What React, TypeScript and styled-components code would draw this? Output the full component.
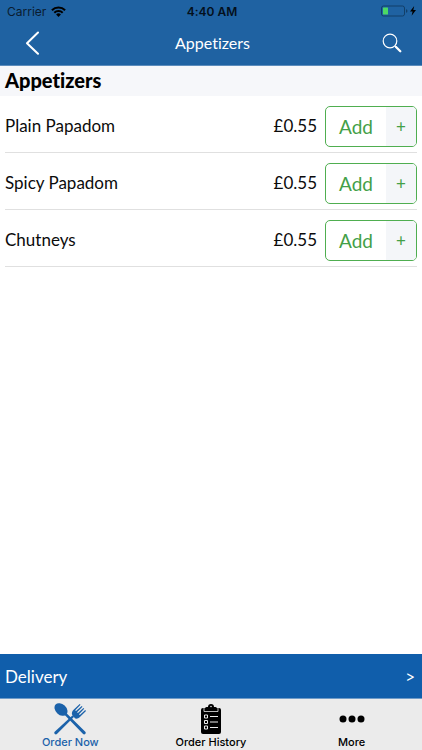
import React from "react";
import styled, { createGlobalStyle } from "styled-components";

const GlobalStyle = createGlobalStyle`
  * { box-sizing: border-box; }
  body {
    margin: 0;
    background: #fff;
    color: #0b0b0b;
    font-family: Lato, "Open Sans", sans-serif;
    font-variant-ligatures: none;
  }
  button { font: inherit; color: inherit; border: 0; padding: 0; background: none; cursor: pointer; }
  svg { display: block; }
`;

const Screen = styled.div`
  display: flex;
  flex-direction: column;
  min-height: 100vh;
`;

const Header = styled.header`
  background: #1f62a2;
  border-bottom: 1px solid #5c8cbc;
`;

const StatusBar = styled.div`
  display: grid;
  grid-template-columns: 1fr auto 1fr;
  align-items: center;
  height: 22px;
  padding: 0 5px 0 7px;
  font-family: Inter, sans-serif;
  font-size: 12px;
  color: #0a1c30;
`;

const Carrier = styled.div`
  display: flex;
  align-items: center;
  gap: 5px;
`;

const Clock = styled.time`
  font-weight: 600;
  color: #04101c;
`;

const Battery = styled.div`
  display: flex;
  align-items: center;
  justify-content: flex-end;
`;

const NavBar = styled.nav`
  display: grid;
  grid-template-columns: 60px 1fr 60px;
  align-items: center;
  height: 43px;
  padding: 0 0 2px 3px;
  color: #fff;
`;

const NavTitle = styled.h1`
  margin: 0;
  font-size: 16px;
  line-height: 20px;
  font-weight: 400;
  text-align: center;
`;

const NavButton = styled.button`
  display: flex;
  align-items: center;
  justify-content: center;
  height: 41px;
`;

const Main = styled.main`
  flex: 1;
`;

const SectionTitle = styled.h2`
  margin: 0;
  padding: 0 5px 2px;
  background: #f6f7fa;
  color: #000;
  font-size: 20px;
  line-height: 28px;
  font-weight: 900;
`;

const ItemList = styled.ul`
  margin: 0;
  padding: 0 5px;
  list-style: none;
`;

const Item = styled.li`
  display: flex;
  align-items: center;
  height: 57px;
  padding-top: 4px;
  border-bottom: 1px solid #e0e0e0;
  font-size: 17px;
  line-height: 20px;
`;

const ItemName = styled.span`
  flex: 1;
`;

const Price = styled.span`
  margin-right: 8px;
`;

const AddButton = styled.button`
  display: flex;
  width: 92px;
  height: 41px;
  border: 1px solid #4fae50;
  border-radius: 5px;
  overflow: hidden;
  background: #fff;
  color: #43a047;
  line-height: 39px;
`;

const AddLabel = styled.span`
  flex: 1;
  font-size: 19px;
`;

const Plus = styled.span`
  display: flex;
  align-items: center;
  justify-content: center;
  width: 30px;
  background: #f4f6f9;
`;

const DeliveryBar = styled.button`
  display: flex;
  align-items: center;
  justify-content: space-between;
  width: 100%;
  height: 44px;
  padding: 0 7px 0 5px;
  background: #105eab;
  color: #fff;
  font-size: 17px;
`;

const TabBar = styled.nav`
  display: grid;
  grid-template-columns: repeat(3, 1fr);
  height: 52px;
  background: #ebebeb;
  border-top: 1px solid #6f9bc8;
`;

const Tab = styled.button<{ $active?: boolean }>`
  display: flex;
  flex-direction: column;
  align-items: center;
  padding-top: 4px;
  color: ${(p) => (p.$active ? "#1b62aa" : "#000")};
  font-family: Inter, sans-serif;
  font-size: 11px;
  font-weight: 500;
  line-height: 14px;
`;

const WifiIcon = () => (
  <svg width="15" height="11" viewBox="0 0 15 11" fill="none" stroke="#000" strokeWidth="2" aria-hidden="true">
    <path d="M.9 4.2a9.3 9.3 0 0 1 13.2 0M3.3 6.7a6 6 0 0 1 8.4 0" />
    <path d="M5.1 8.4a3.4 3.4 0 0 1 4.8 0L7.5 11Z" fill="#000" stroke="none" />
  </svg>
);

const BatteryIcon = () => (
  <svg width="36" height="13" viewBox="0 0 36 13" aria-label="Battery charging">
    <rect x=".5" y="1" width="23" height="10" rx="2" fill="none" stroke="#123f68" />
    <rect x="2" y="2.5" width="5" height="7" rx=".5" fill="#4cd964" />
    <path d="M25 4.200q1.500.3 1.500 1.800T25 7.800Z" fill="#123f68" />
    <path d="M33.2 1 29 6.500h2.600l-1 4.300L35 5.100h-2.700Z" fill="#000" />
  </svg>
);

const BackIcon = () => (
  <svg width="16" height="24" viewBox="0 0 16 24" fill="none" stroke="#fff" strokeWidth="2" strokeLinecap="round" strokeLinejoin="round" aria-hidden="true">
    <path d="M13 1.5 2 12.2 13 22.8" />
  </svg>
);

const SearchIcon = () => (
  <svg width="20" height="20" viewBox="0 0 20 20" fill="none" stroke="#fff" aria-hidden="true">
    <circle cx="8" cy="8" r="6.8" strokeWidth="1.2" />
    <path d="m12.8 12.8 1.8 1.8" strokeWidth="1.2" />
    <path d="m14 14 4.3 4.2" strokeWidth="2.3" strokeLinecap="round" />
  </svg>
);

const CutleryIcon = () => (
  <svg width="32" height="32" viewBox="0 0 32 32" fill="#1b62aa" aria-hidden="true">
    <ellipse cx="7" cy="6.500" rx="7.400" ry="5.300" transform="rotate(43 7 6.500)" />
    <path d="m10 11.300 1.800-1.800L31.300 28.800c1.400 1.300-.8 3.600-2.200 2.200Z" />
    <path d="M.7 28.800 18.600 12.200l1.500 1.500L2.900 31C1.500 32.400-.7 30.100.7 28.800Z" />
    <path d="M18 11.500c-.4-2 .2-3.400 1.600-4.800L25.700.9l.8.800-5.300 5.600.8.800 5.700-5.200.8.800-5.400 5.500.8.800 5.500-5.100.8.800-5.200 5.500.8.800 5.400-4.900.8.800-6.100 6.200c-1.500 1.500-2.900 1.900-4.800 1.500Z" />
  </svg>
);

const ClipboardIcon = () => (
  <svg width="22" height="32" viewBox="0 0 22 32" aria-hidden="true">
    <path d="M3 5h16a2 2 0 0 1 2 2v22a2 2 0 0 1-2 2H3a2 2 0 0 1-2-2V7a2 2 0 0 1 2-2Z" />
    <path d="M4 5v3.500h14V5" fill="none" stroke="#ebebeb" strokeWidth=".8" />
    <path d="M5 7.700V5.500A1.500 1.500 0 0 1 6.500 4H8a3 3 0 0 1 6 0h1.500A1.500 1.500 0 0 1 17 5.500v2.200Z" />
    <circle cx="11" cy="3.500" r=".8" fill="#ebebeb" />
    <g fill="none" stroke="#ebebeb" strokeWidth="1">
      <path d="M4.500 12h3v3h-3ZM4.500 17.500h3v3h-3ZM4.500 23h3v3h-3Z" />
      <path d="M10 13.500h8M10 19h8M10 24.500h8" />
    </g>
  </svg>
);

const DotsIcon = () => (
  <svg width="26" height="32" viewBox="0 0 26 32" aria-hidden="true">
    <circle cx="4" cy="16" r="3.500" />
    <circle cx="13" cy="16" r="3.500" />
    <circle cx="22" cy="16" r="3.500" />
  </svg>
);

const items = [
  { name: "Plain Papadom", price: "£0.55" },
  { name: "Spicy Papadom", price: "£0.55" },
  { name: "Chutneys", price: "£0.55" },
];

export default function App() {
  return (
    <>
      <GlobalStyle />
      <Screen>
        <Header>
          <StatusBar>
            <Carrier>
              Carrier <WifiIcon />
            </Carrier>
            <Clock>4:40 AM</Clock>
            <Battery>
              <BatteryIcon />
            </Battery>
          </StatusBar>
          <NavBar>
            <NavButton aria-label="Back">
              <BackIcon />
            </NavButton>
            <NavTitle>Appetizers</NavTitle>
            <NavButton aria-label="Search">
              <SearchIcon />
            </NavButton>
          </NavBar>
        </Header>
        <Main>
          <SectionTitle>Appetizers</SectionTitle>
          <ItemList>
            {items.map((item) => (
              <Item key={item.name}>
                <ItemName>{item.name}</ItemName>
                <Price>{item.price}</Price>
                <AddButton aria-label={`Add ${item.name}`}>
                  <AddLabel>Add</AddLabel>
                  <Plus>+</Plus>
                </AddButton>
              </Item>
            ))}
          </ItemList>
        </Main>
        <DeliveryBar>
          <span>Delivery</span>
          <span>&gt;</span>
        </DeliveryBar>
        <TabBar>
          <Tab $active aria-current="page">
            <CutleryIcon />
            Order Now
          </Tab>
          <Tab>
            <ClipboardIcon />
            Order History
          </Tab>
          <Tab>
            <DotsIcon />
            More
          </Tab>
        </TabBar>
      </Screen>
    </>
  );
}
